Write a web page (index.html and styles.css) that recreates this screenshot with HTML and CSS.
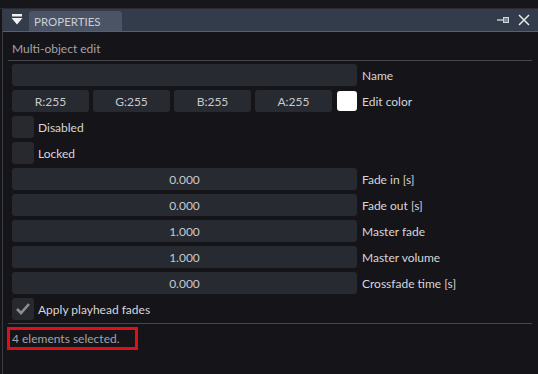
FILE: index.html
```html
<!DOCTYPE html>
<html>
<head>
<meta charset="utf-8">
<link rel="stylesheet" href="styles.css">
</head>
<body>
<div class="topstrip"></div>
<div class="window">
  <div class="titlebar">
    <div class="menuicon">
      <svg width="12" height="12" viewBox="0 0 12 12"><rect x="1" y="0" width="10" height="2.5" fill="#f2f2f2"/><path d="M0.5 4 L11.5 4 L6 10.5 Z" fill="#f2f2f2"/></svg>
    </div>
    <div class="tab">PROPERTIES</div>
    <div class="spacer"></div>
    <div class="pin">
      <svg width="14" height="8" viewBox="0 0 14 8"><rect x="0" y="3" width="6" height="2" fill="#9aa3ad"/><rect x="6.5" y="1.5" width="5" height="5" fill="#7f8894" stroke="#d0d4da" stroke-width="1"/></svg>
    </div>
    <div class="close">
      <svg width="12" height="12" viewBox="0 0 12 12"><path d="M1 1 L11 11 M11 1 L1 11" stroke="#e6e8ea" stroke-width="1.5"/></svg>
    </div>
  </div>
  <div class="content">
    <div class="heading">Multi-object edit</div>
    <div class="sep"></div>
    <div class="rows">
      <div class="row"><div class="field"></div><div class="label">Name</div></div>
      <div class="row">
        <div class="colors">
          <div class="field small">R:255</div>
          <div class="field small">G:255</div>
          <div class="field small">B:255</div>
          <div class="field small">A:255</div>
          <div class="swatch"></div>
        </div>
        <div class="label">Edit color</div>
      </div>
      <div class="checkrow"><div class="box"></div><div class="label">Disabled</div></div>
      <div class="checkrow"><div class="box"></div><div class="label">Locked</div></div>
      <div class="row"><div class="field">0.000</div><div class="label">Fade in [s]</div></div>
      <div class="row"><div class="field">0.000</div><div class="label">Fade out [s]</div></div>
      <div class="row"><div class="field">1.000</div><div class="label">Master fade</div></div>
      <div class="row"><div class="field">1.000</div><div class="label">Master volume</div></div>
      <div class="row"><div class="field">0.000</div><div class="label">Crossfade time [s]</div></div>
      <div class="checkrow"><div class="box"><svg width="16" height="14" viewBox="0 0 16 14"><path d="M2 7 L6 11 L14 2" fill="none" stroke="#8a8d93" stroke-width="2.6"/></svg></div><div class="label">Apply playhead fades</div></div>
    </div>
    <div class="sep bottom"></div>
    <div class="status">4 elements selected.</div>
  </div>
</div>
</body>
</html>
```
FILE: styles.css
```css
html, body {
  margin: 0;
  padding: 0;
  background: #151419;
  width: 538px;
  height: 374px;
  overflow: hidden;
  font-family: Lato, "Noto Sans", sans-serif;
}
.topstrip {
  height: 8px;
  background: #17161b;
  border-bottom: 1px solid #2b2b31;
}
.window {
  margin-left: 2px;
  border-left: 1px solid #3a3a41;
  height: 365px;
}
.titlebar {
  height: 22px;
  background: #323c4a;
  border-bottom: 1px solid #55636f;
  display: flex;
  align-items: flex-end;
}
.menuicon {
  width: 26px;
  height: 22px;
  display: flex;
  align-items: center;
  justify-content: center;
}
.menuicon svg { margin-left: 2px; }
.tab {
  width: 93px;
  height: 20px;
  box-sizing: border-box;
  background: #4b5465;
  border-radius: 3px 3px 0 0;
  color: #c9ced6;
  font-size: 11.5px;
  line-height: 21px;
  padding-left: 5px;
}
.spacer { flex: 1; }
.pin {
  height: 22px;
  display: flex;
  align-items: center;
  margin-right: 7px;
}
.close {
  height: 22px;
  display: flex;
  align-items: center;
  margin-right: 8px;
}
.content {
  padding: 0 0 0 9px;
}
.heading {
  color: #a3a3aa;
  font-size: 12px;
  line-height: 16px;
  margin-top: 9px;
}
.sep {
  height: 1px;
  background: #47464d;
  margin: 3px 6px 3px -4px;
}
.rows {
  display: flex;
  flex-direction: column;
  gap: 4px;
}
.row, .checkrow {
  display: flex;
  align-items: center;
  height: 22px;
}
.field {
  width: 345px;
  height: 22px;
  box-sizing: border-box;
  background: #272a30;
  border-radius: 3px;
  color: #c8c9cc;
  font-size: 12px;
  line-height: 23px;
  text-align: center;
  flex: none;
}
.colors {
  display: flex;
  gap: 4px;
  width: 345px;
  flex: none;
}
.field.small { width: 77px; }
.swatch {
  width: 20px;
  height: 20px;
  background: #ffffff;
  border-radius: 3px;
  margin-left: 1px;
  margin-top: 1px;
}
.label {
  color: #d6d6da;
  font-size: 12px;
  margin-left: 5px;
  padding-top: 1px;
}
.box {
  width: 22px;
  height: 22px;
  background: #27292f;
  border-radius: 3px;
  display: flex;
  align-items: center;
  justify-content: center;
}
.checkrow .label { margin-left: 4px; }
.sep.bottom {
  margin-top: 3px;
  margin-bottom: 0;
}
.status {
  display: inline-block;
  margin-top: 3px;
  margin-left: -5px;
  border: 3px solid #e0101a;
  width: 131px;
  height: 23px;
  box-sizing: border-box;
  color: #a3a3aa;
  font-size: 12px;
  line-height: 17px;
  padding-left: 2px;
}
```
